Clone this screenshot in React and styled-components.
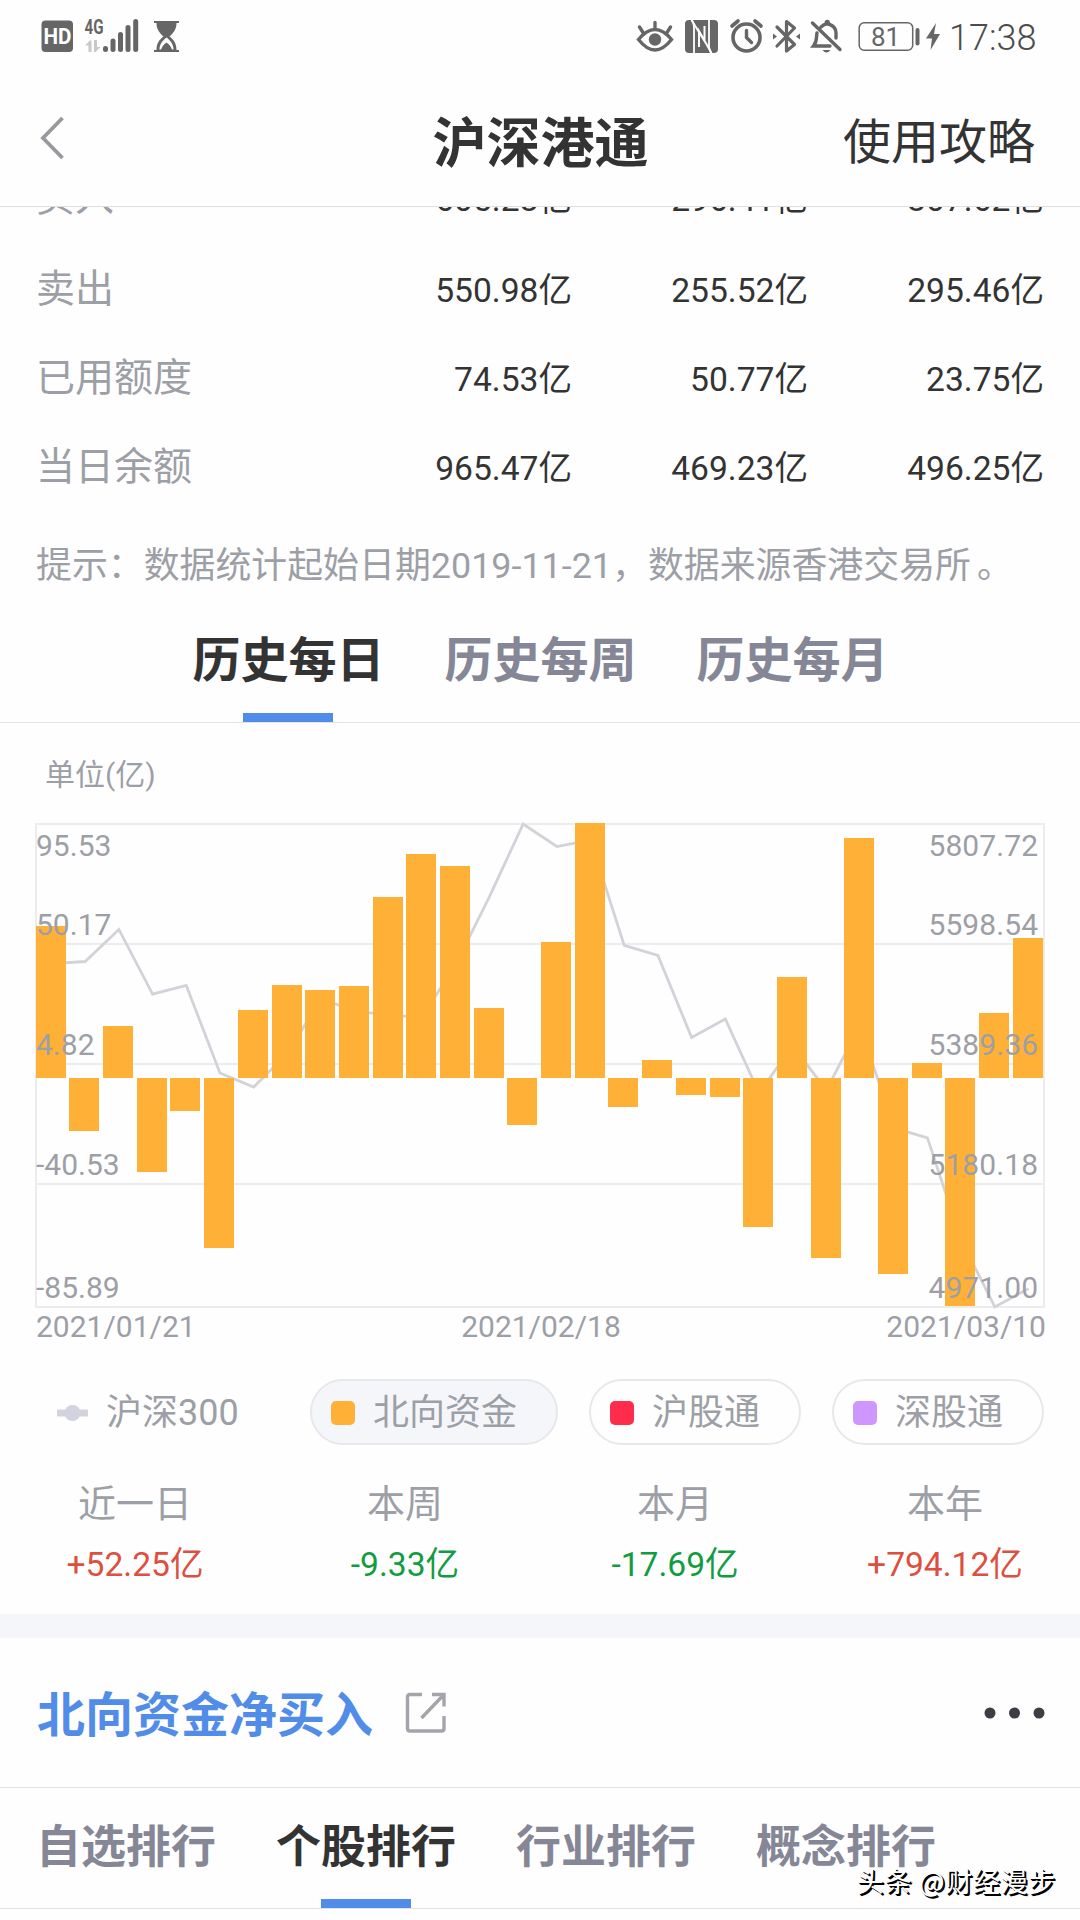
import React from 'react'
import styled, { createGlobalStyle } from 'styled-components'

const BARS = [
    57.2, -19.8, 19.6, -35.2, -12.3, -63.7, 25.6, 35.0, 33.2, 34.7,
    68.1, 84.2, 79.8, 26.4, -17.5, 51.2, 95.53, -10.8, 6.9, -6.3,
    -7.0, -55.9, 38.1, -67.5, 90.3, -73.5, 5.7, -85.5, 24.5, 52.7,
];

const INDEX = [
    5566, 5569.5, 5625, 5513, 5528, 5376.5, 5352, 5410, 5505, 5484,
    5476.7, 5473, 5564.6, 5682, 5807.7, 5768.7, 5779.9, 5597.4, 5580, 5438,
    5470, 5341.8, 5423.5, 5346.8, 5459.4, 5281.2, 5263.9, 5087, 4971.2, 5002.8,
];

const ROWS = [
    { label: '买入', values: ['605.28亿', '296.41亿', '307.62亿'] },
    { label: '卖出', values: ['550.98亿', '255.52亿', '295.46亿'] },
    { label: '已用额度', values: ['74.53亿', '50.77亿', '23.75亿'] },
    { label: '当日余额', values: ['965.47亿', '469.23亿', '496.25亿'] },
];

const LEGEND = [
    { label: '北向资金', color: '#ffb037', active: true },
    { label: '沪股通', color: '#ff2c4c' },
    { label: '深股通', color: '#d096ff' },
];

const STATS = [
    { label: '近一日', value: '+52.25亿' },
    { label: '本周', value: '-9.33亿' },
    { label: '本月', value: '-17.69亿' },
    { label: '本年', value: '+794.12亿' },
];

const CHART = { width: 1009, height: 483, step: 33.69, bar: 30 };

function StatusBar() {
    return (
        <Status>
            <svg width="150" height="40" viewBox="40 16 150 40" fill="#666">
                <rect x="41.5" y="20.5" width="31.5" height="31.5" rx="4" />
                <text x="57.5" y="44" textAnchor="middle" fill="#fff" fontSize="22" fontWeight="700" textLength="28" lengthAdjust="spacingAndGlyphs">HD</text>
                <text x="84.5" y="34" fontSize="20" fontWeight="700" textLength="19" lengthAdjust="spacingAndGlyphs">4G</text>
                <path fill="#c8c8c8" d="M85 45.500l5-5h1.500V52h-3v-6.500zM94 40h3v7h3.500l-5 5H94z" />
                <path stroke="#666" strokeWidth="5" strokeLinecap="round" d="M105.500 48.500v1M113 41v8.500M120.500 34.500v15M128 27.500v22M135.700 21.500v28" />
                <path d="M154 21h25v2h-2.500c0 6-3 10-7 13.500c4.500 3.500 7 7 7 13.500h2.500v2h-25v-2h2.500c0-6.500 2.500-10 7-13.500c-4-3.500-7-7.500-7-13.500H154z" />
                <path fill="#fff" d="M166.500 37.500c-4.500 3.500-7 7-7 12h1.500c1.500-3.500 2.500-5 5.500-7c3 2 4 3.500 5.500 7h1.500c0-5-2.500-8.500-7-12z" />
            </svg>
            <svg width="290" height="40" viewBox="632 16 290 40" fill="none" stroke="#666" strokeWidth="3.400" strokeLinecap="round">
                <path d="M638.500 39.500q16.500-20 33 0q-16.500 21-33 0z" />
                <path d="M655 22.500v5M639.500 27l3.500 5.500M670.500 27l-3.500 5.500" />
                <circle cx="655" cy="39.500" r="6.200" fill="#666" stroke="none" />
                <rect x="685" y="20" width="33" height="33" rx="4" fill="#666" stroke="none" />
                <path stroke="#fff" strokeWidth="1.800" strokeLinecap="butt" d="M691.500 20q2.500 2 2.500 9V53M711.500 53q-2.500-2-2.500-9V20" />
                <path stroke="#fff" strokeWidth="2" strokeLinecap="butt" d="M699 47V31l12.500 22M691.500 20L704.500 41V26" />
                <circle cx="746.500" cy="37.500" r="13.500" strokeWidth="3.600" />
                <path d="M746.500 30.500v7l5 5" />
                <path d="M732 26l6-5M761 26l-6-5" strokeWidth="3.600" />
                <path strokeWidth="3.200" strokeLinejoin="round" d="M777 27l17.500 17.500L786.500 51V21.500l8 6.500L777 46" />
                <path fill="#666" stroke="none" d="M773 33.500l4 3-4 3zM800 33.500l-4 3 4 3z" />
                <path d="M812.500 23l27.500 26.500M817 33c-1 4 .5 8-3.500 13h16.500M821 27q2.500-2.500 5-3c0-3.500 2.500-3.500 2.500 0c5 1.500 7.500 4.500 7.500 9v5" />
                <path fill="#666" stroke="none" d="M822.500 50h8q-4 5-8 0z" />
                <rect x="859.200" y="22.700" width="53.500" height="27.500" rx="5" strokeWidth="1.500" />
                <path d="M917.500 30v13.500" strokeWidth="4" />
                <text x="885.500" y="45.700" fill="#666" stroke="none" textAnchor="middle" fontSize="26">81</text>
            </svg>
            <svg width="16" height="28" viewBox="0 0 16 28" fill="#666">
                <path d="M11 0L1 15.500h6L5.500 27L15 11H9z" />
            </svg>
            <Clock>17:38</Clock>
        </Status>
    )
}

function Chart() {
    const { width, height, step, bar } = CHART;
    const yBar = (v) => (95.53 - v) / 181.42 * height;
    const yIndex = (v) => (5807.72 - v) / 836.72 * height;
    const zero = Math.round(yBar(0));
    const points = INDEX.map((v, i) => `${15.5 + i * step},${yIndex(v)}`).join(' ');

    return (
        <svg width={width} height={height + 2} viewBox={`0 -1 ${width} ${height + 2}`} overflow="visible" fontSize="30" fill="#9d9fa6">
            <path d={`M0 0H1008V${height}H0ZM0 120H1008M0 240H1008M0 360H1008`} fill="none" stroke="#ececee" strokeWidth="2" />
            <polyline points={points} fill="none" stroke="#d2d3d8" strokeWidth="2.8" />
            {BARS.map((v, i) => {
                const y = Math.round(yBar(v)) || -1;
                return (
                    <rect
                        key={i}
                        x={Math.floor(i * step + 0.2)}
                        y={Math.min(y, zero)}
                        width={bar}
                        height={Math.abs(zero - y)}
                        fill="#ffb037"
                    />
                )
            })}
            {['95.53', '50.17', '4.82', '-40.53', '-85.89'].map((t, i) =>
                <text key={t} x="0" y={[32, 111, 231, 351, 474][i]}>{t}</text>
            )}
            {['5807.72', '5598.54', '5389.36', '5180.18', '4971.00'].map((t, i) =>
                <text key={t} x="1002" y={[32, 111, 231, 351, 474][i]} textAnchor="end" textLength="109.500">{t}</text>
            )}
        </svg>
    )
}

export default function App() {
    return (
        <Page>
            <GlobalStyle />
            <StatusBar />
            <Header>
                <svg width="26" height="44" viewBox="0 0 26 44" fill="none" stroke="#97999c" strokeWidth="3.800">
                    <path d="M23.500 2L4 22l19.500 20" />
                </svg>
                <Title>沪深港通</Title>
                <Guide>使用攻略</Guide>
            </Header>
            <TableClip>
                {ROWS.map((row) =>
                    <Row key={row.label}>
                        <RowLabel>{row.label}</RowLabel>
                        {row.values.map((v) => <RowValue key={v}>{v}</RowValue>)}
                    </Row>
                )}
            </TableClip>
            <Hint>提示：数据统计起始日期2019-11-21，数据来源香港交易所<FullStop>。</FullStop></Hint>
            <HistoryTabs>
                <Tab $active>历史每日</Tab>
                <Tab>历史每周</Tab>
                <Tab>历史每月</Tab>
            </HistoryTabs>
            <ChartSection>
                <Unit>单位(亿)</Unit>
                <Chart />
                <Dates>
                    <span>2021/01/21</span>
                    <span>2021/02/18</span>
                    <span>2021/03/10</span>
                </Dates>
            </ChartSection>
            <Legend>
                <LineKey>
                    <svg width="31" height="18" viewBox="0 0 31 18" fill="#d2d3de">
                        <rect y="5.500" width="31" height="7" rx="1" />
                        <circle cx="15.500" cy="9" r="8" />
                    </svg>
                    沪深300
                </LineKey>
                {LEGEND.map((item) =>
                    <Pill key={item.label} $active={item.active}>
                        <Swatch $color={item.color} />
                        {item.label}
                    </Pill>
                )}
            </Legend>
            <Stats>
                {STATS.map((s) =>
                    <Stat key={s.label}>
                        <StatLabel>{s.label}</StatLabel>
                        <StatValue $up={s.value[0] === '+'}>{s.value}</StatValue>
                    </Stat>
                )}
            </Stats>
            <Band />
            <SectionHead>
                <SectionTitle>北向资金净买入</SectionTitle>
                <svg width="42" height="42" viewBox="0 0 42 42" fill="none" stroke="#a3a5ab" strokeWidth="3.400">
                    <path d="M17 2.500H5Q2.500 2.500 2.500 5V36.500Q2.500 39 5 39H36.500Q39 39 39 36.500V24M27 2.500H39V14.500M39 2.500L16.500 26" />
                </svg>
                <Dots width="62" height="14" viewBox="0 0 62 14" fill="#3c3e44">
                    <circle cx="7" cy="7" r="5.500" />
                    <circle cx="31.500" cy="7" r="5.500" />
                    <circle cx="56" cy="7" r="5.500" />
                </Dots>
            </SectionHead>
            <RankTabs>
                <Tab>自选排行</Tab>
                <Tab $active>个股排行</Tab>
                <Tab>行业排行</Tab>
                <Tab>概念排行</Tab>
            </RankTabs>
            <Watermark>头条 @财经漫步</Watermark>
        </Page>
    )
}

const GlobalStyle = createGlobalStyle`
    body {
        margin: 0;
        background: #fefefe;
    }
    * {
        box-sizing: border-box;
    }
    svg {
        display: block;
        flex: none;
    }
`;

const Page = styled.div`
    position: relative;
    width: 1080px;
    height: 1920px;
    overflow: hidden;
    display: flex;
    flex-direction: column;
    background: #fefefe;
    color: #333;
    font-family: Roboto, "Noto Sans CJK SC", sans-serif;
    white-space: nowrap;
    > * {
        flex: none;
    }
`;

const Status = styled.div`
    height: 72px;
    padding: 0 42px 0 40px;
    display: flex;
    align-items: center;
    svg:nth-of-type(2) {
        margin-left: 442px;
    }
    svg:nth-of-type(3) {
        margin: 2px 0 0 3px;
    }
`;

const Clock = styled.div`
    margin: 3px 0 0 8px;
    font-size: 36px;
    line-height: 42px;
    font-weight: 300;
    color: #4c4c4c;
`;

const Header = styled.div`
    height: 135px;
    padding: 0 45px 0 39px;
    display: grid;
    grid-template-columns: 1fr auto 1fr;
    align-items: center;
    border-bottom: 1px solid #dedfe1;
    > svg {
        margin-top: -3px;
    }
`;

const Title = styled.h1`
    margin: 11px 0 0 7px;
    font-size: 54px;
    line-height: 64px;
    font-weight: 700;
`;

const Guide = styled.div`
    margin-top: 7px;
    justify-self: end;
    font-size: 48px;
    line-height: 60px;
`;

const TableClip = styled.div`
    height: 304px;
    overflow: hidden;
    padding: 0 36px;
    display: flex;
    flex-direction: column;
    justify-content: flex-end;
`;

const Row = styled.div`
    flex: none;
    height: 89px;
    display: grid;
    grid-template-columns: 1fr 236px 236px 236px;
    align-items: center;
    &:first-child {
        margin-bottom: 2px;
    }
`;

const RowLabel = styled.div`
    font-size: 39px;
    line-height: 48px;
    color: #9d9fa6;
`;

const RowValue = styled.div`
    padding-top: 4px;
    font-size: 33.6px;
    line-height: 48px;
    text-align: right;
`;

const Hint = styled.div`
    height: 108px;
    padding: 30px 36px 0;
    font-size: 35.9px;
    line-height: 50px;
    color: #9d9fa6;
`;

const FullStop = styled.span`
    margin-left: 6px;
`;

const HistoryTabs = styled.div`
    height: 104px;
    padding: 2px 0 0 1px;
    display: flex;
    justify-content: center;
    gap: 60px;
    border-bottom: 1px solid #e2e3e5;
    font-size: 48px;
`;

const Tab = styled.div`
    position: relative;
    height: 100%;
    display: flex;
    align-items: flex-start;
    line-height: 80px;
    font-weight: 700;
    color: ${({ $active }) => $active ? '#333' : '#858796'};
    &::after {
        content: '';
        display: ${({ $active }) => $active ? 'block' : 'none'};
        position: absolute;
        left: calc(50% - 45px);
        bottom: 0;
        width: 90px;
        height: 9px;
        background: #518de8;
    }
`;

const ChartSection = styled.div`
    height: 656px;
    padding: 28px 34px 0 36px;
`;

const Unit = styled.div`
    height: 72px;
    padding-left: 9px;
    font-size: 30px;
    line-height: 48px;
    color: #9d9fa6;
`;

const Dates = styled.div`
    display: flex;
    justify-content: space-between;
    font-size: 30px;
    line-height: 38px;
    color: #9d9fa6;
`;

const Legend = styled.div`
    height: 66px;
    padding: 0 36px 0 57px;
    display: flex;
    gap: 31px;
    font-size: 36px;
    color: #9d9fa6;
`;

const LineKey = styled.div`
    flex: 1;
    display: flex;
    align-items: center;
    gap: 18px;
    line-height: 60px;
    padding-top: 1px;
`;

const Pill = styled.div`
    flex: none;
    display: flex;
    align-items: center;
    gap: 18px;
    padding: 1px 39px 0 19px;
    border: 2px solid #e8e8ec;
    border-radius: 33px;
    background: ${({ $active }) => $active ? '#f4f6fa' : 'transparent'};
    line-height: 60px;
`;

const Swatch = styled.div`
    width: 24px;
    height: 24px;
    border-radius: 5px;
    background: ${({ $color }) => $color};
`;

const Stats = styled.div`
    height: 169px;
    padding-top: 29px;
    display: grid;
    grid-template-columns: repeat(4, 1fr);
    text-align: center;
`;

const Stat = styled.div`
    line-height: 60px;
`;

const StatLabel = styled.div`
    font-size: 38px;
    color: #9d9fa6;
`;

const StatValue = styled.div`
    padding-top: 1px;
    font-size: 33.6px;
    color: ${({ $up }) => $up ? '#dd4f3e' : '#129c42'};
`;

const Band = styled.div`
    height: 24px;
    background: #f4f6fa;
`;

const SectionHead = styled.div`
    height: 150px;
    padding: 0 35px 0 37px;
    display: flex;
    align-items: center;
    border-bottom: 1px solid #e2e3e5;
`;

const SectionTitle = styled.h2`
    margin: 6px 32px 0 0;
    font-size: 48px;
    line-height: 60px;
    font-weight: 700;
    color: #518de8;
`;

const Dots = styled.svg`
    margin-left: auto;
`;

const RankTabs = styled.div`
    height: 121px;
    padding: 0 36px;
    display: flex;
    gap: 60px;
    border-bottom: 1px solid #e2e3e5;
    font-size: 45px;
    ${Tab} {
        line-height: 119px;
    }
`;

const Watermark = styled.div`
    position: absolute;
    right: 24px;
    bottom: 19px;
    font-family: "Noto Sans CJK SC", sans-serif;
    font-size: 27px;
    line-height: 40px;
    letter-spacing: 0.7px;
    color: #fff;
    text-shadow: 1px 1px 0 #000, 2px 2px 0 #000;
`;
